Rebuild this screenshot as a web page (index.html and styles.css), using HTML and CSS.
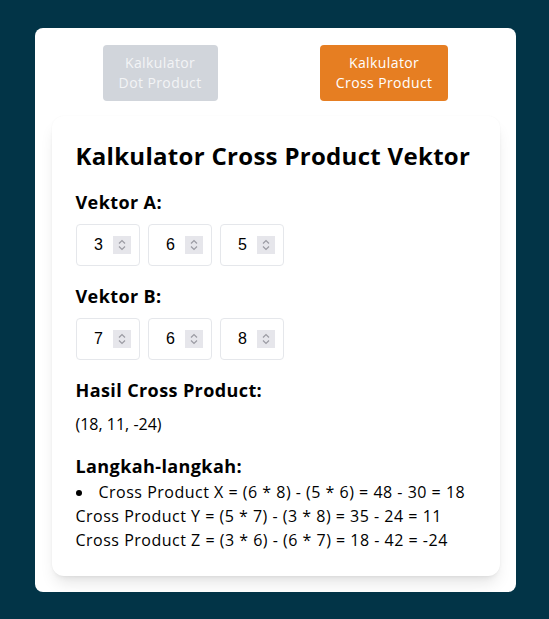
FILE: index.html
```html
<!DOCTYPE html>
<html lang="id">
<head>
<meta charset="utf-8">
<title>Kalkulator Cross Product</title>
<link rel="stylesheet" href="styles.css">
</head>
<body>
<main class="app">
  <div class="tabs">
    <button class="tab tab-off">Kalkulator<br>Dot Product</button>
    <button class="tab tab-on">Kalkulator<br>Cross Product</button>
  </div>
  <section class="card">
    <h1 class="title">Kalkulator Cross Product Vektor</h1>

    <h3 class="label">Vektor A:</h3>
    <div class="inputs">
      <div class="num"><span class="val">3</span><span class="spin"><svg viewBox="0 0 18 18" width="18" height="18"><path d="M6 7.5 9 4.5 12 7.5M6 10.5 9 13.5 12 10.5" fill="none" stroke="#9b9ba3" stroke-width="1.2"/></svg></span></div>
      <div class="num"><span class="val">6</span><span class="spin"><svg viewBox="0 0 18 18" width="18" height="18"><path d="M6 7.5 9 4.5 12 7.5M6 10.5 9 13.5 12 10.5" fill="none" stroke="#9b9ba3" stroke-width="1.2"/></svg></span></div>
      <div class="num"><span class="val">5</span><span class="spin"><svg viewBox="0 0 18 18" width="18" height="18"><path d="M6 7.5 9 4.5 12 7.5M6 10.5 9 13.5 12 10.5" fill="none" stroke="#9b9ba3" stroke-width="1.2"/></svg></span></div>
    </div>

    <h3 class="label">Vektor B:</h3>
    <div class="inputs">
      <div class="num"><span class="val">7</span><span class="spin"><svg viewBox="0 0 18 18" width="18" height="18"><path d="M6 7.5 9 4.5 12 7.5M6 10.5 9 13.5 12 10.5" fill="none" stroke="#9b9ba3" stroke-width="1.2"/></svg></span></div>
      <div class="num"><span class="val">6</span><span class="spin"><svg viewBox="0 0 18 18" width="18" height="18"><path d="M6 7.5 9 4.5 12 7.5M6 10.5 9 13.5 12 10.5" fill="none" stroke="#9b9ba3" stroke-width="1.2"/></svg></span></div>
      <div class="num"><span class="val">8</span><span class="spin"><svg viewBox="0 0 18 18" width="18" height="18"><path d="M6 7.5 9 4.5 12 7.5M6 10.5 9 13.5 12 10.5" fill="none" stroke="#9b9ba3" stroke-width="1.2"/></svg></span></div>
    </div>

    <h3 class="label">Hasil Cross Product:</h3>
    <p class="result">(18, 11, -24)</p>

    <h3 class="label label-tight">Langkah-langkah:</h3>
    <ul class="steps">
      <li>Cross Product X = (6 * 8) - (5 * 6) = 48 - 30 = 18<br>Cross Product Y = (5 * 7) - (3 * 8) = 35 - 24 = 11<br>Cross Product Z = (3 * 6) - (6 * 7) = 18 - 42 = -24</li>
    </ul>
  </section>
</main>
</body>
</html>
```

FILE: styles.css
```css
* { box-sizing: border-box; }

html, body {
  margin: 0;
  padding: 0;
}

body {
  min-height: 100vh;
  padding-left: 1px;
  background: #023447;
  font-family: "Open Sans", "Liberation Sans", sans-serif;
  color: #000;
  display: flex;
  align-items: center;
  justify-content: center;
}

.app {
  width: 481px;
  background: #fff;
  border-radius: 8px;
  padding: 16px 16px 16px 17px;
}

.tabs {
  display: flex;
  justify-content: space-around;
  padding-top: 1px;
}

.tab {
  font-family: inherit;
  font-size: 14px;
  line-height: 20px;
  letter-spacing: 0.4px;
  color: #fff;
  border: 0;
  border-radius: 4px;
  padding: 8px 16px;
  text-align: center;
}

.tab-off {
  background: #d1d5db;
  color: #f3f4f6;
}

.tab-on {
  background: #e67e22;
}

.card {
  margin-top: 15px;
  padding: 24px;
  background: #fff;
  border-radius: 12px;
  box-shadow: 0 10px 15px -3px rgba(0,0,0,0.1), 0 4px 6px -4px rgba(0,0,0,0.1), 0 0 2px rgba(0,0,0,0.04);
}

.title {
  margin: 0 0 16px;
  font-size: 24px;
  line-height: 32px;
  font-weight: 700;
  letter-spacing: 0.3px;
}

.label {
  margin: 0 0 8px;
  font-size: 18px;
  line-height: 28px;
  font-weight: 700;
  letter-spacing: 0.4px;
}

.label-tight {
  margin-bottom: 0;
}

.inputs {
  display: flex;
  gap: 8px;
  margin-bottom: 16px;
}

.num {
  width: 64px;
  height: 42px;
  padding: 8px;
  border: 1px solid #e5e7eb;
  border-radius: 4px;
  display: flex;
  align-items: center;
}

.val {
  flex: 1;
  text-align: center;
  font-family: "Liberation Sans", Arial, sans-serif;
  font-size: 16px;
  color: #000;
}

.spin {
  width: 18px;
  height: 18px;
  background: #e6e6eb;
  display: block;
}

.spin svg { display: block; }

.result {
  margin: 0 0 16px;
  font-size: 16px;
  line-height: 24px;
}

.steps {
  margin: 0;
  padding: 0;
  list-style: disc inside;
  font-size: 16px;
  line-height: 24px;
  letter-spacing: 0.5px;
}
```
